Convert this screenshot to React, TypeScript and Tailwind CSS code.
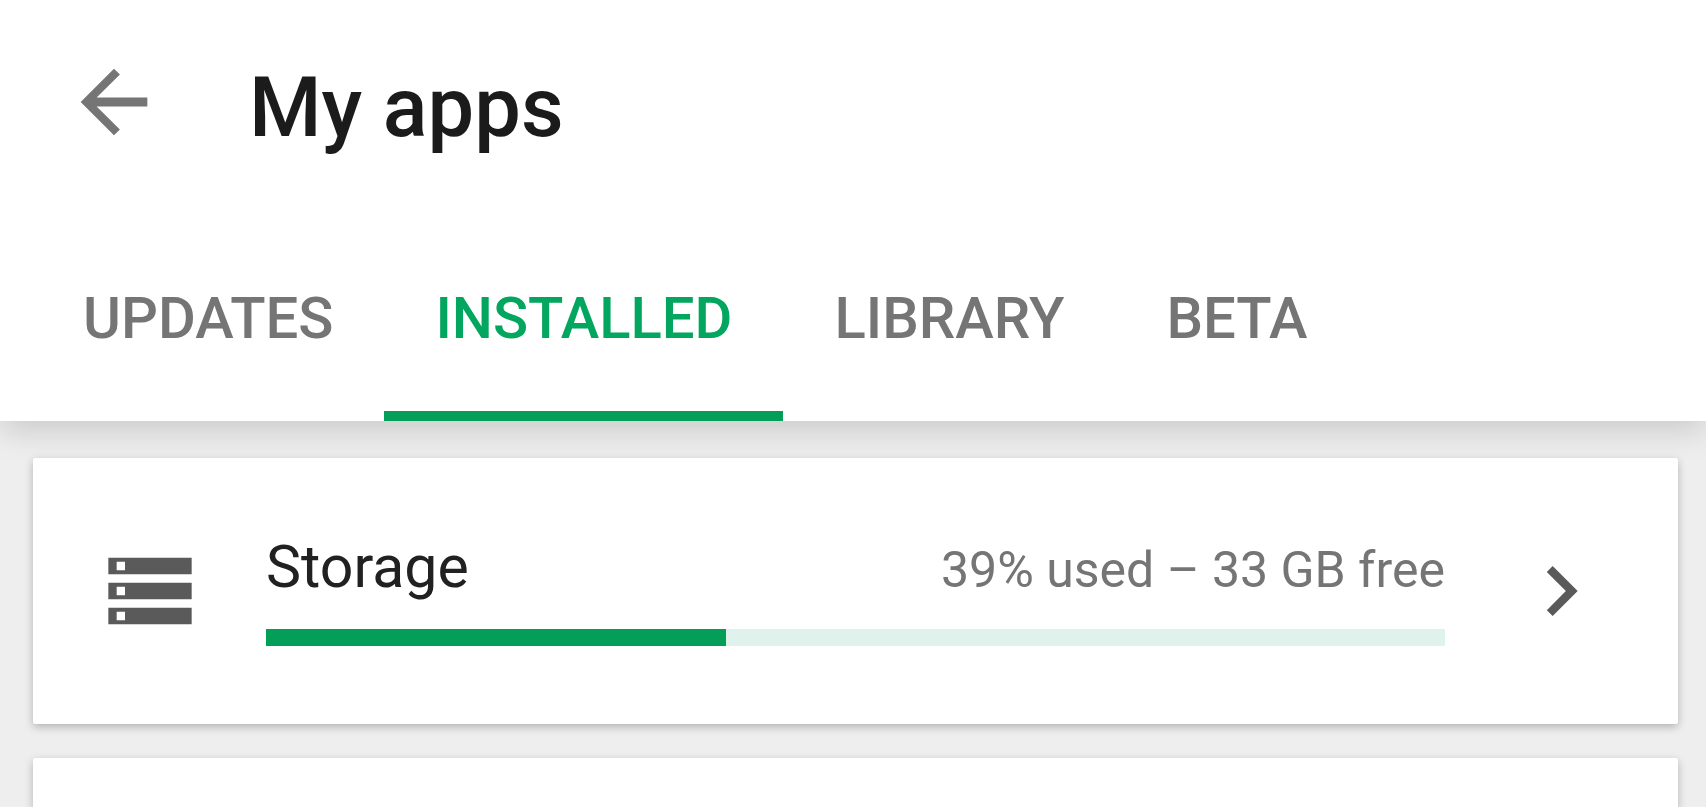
import { useState } from "react";

const tabs = ["Updates", "Installed", "Library", "Beta"];

const storage = { used: 39, free: "33 GB" };

function BackIcon() {
  return (
    <svg viewBox="0 0 24 24" className="size-[100px]" fill="currentColor" aria-hidden="true">
      <path d="M20 10.9H7.83l5.59-5.49L12 4l-8 8 8 8 1.41-1.41L7.83 13.1H20v-2.2z" />
    </svg>
  );
}

function StorageIcon() {
  return (
    <svg viewBox="0 0 24 24" className="size-[100px] shrink-0" fill="currentColor" aria-hidden="true">
      <path d="M2 20h20v-4H2v4zm2-3h2v2H4v-2zM2 4v4h20V4H2zm4 3H4V5h2v2zm-4 7h20v-4H2v4zm2-3h2v2H4v-2z" />
    </svg>
  );
}

function ChevronIcon() {
  return (
    <svg viewBox="0 0 24 24" className="size-[100px] shrink-0" fill="currentColor" aria-hidden="true">
      <path d="M10 6L8.59 7.41 13.17 12l-4.58 4.59L10 18l6-6z" />
    </svg>
  );
}

export default function App() {
  const [active, setActive] = useState("Installed");

  return (
    <div className="flex min-h-screen flex-col bg-[#eeeeee] font-['Roboto',sans-serif]">
      <header className="bg-white shadow-[0_10px_30px_rgba(0,0,0,0.15)]">
        <div className="flex items-start gap-[85px] px-16 pt-[52px]">
          <button type="button" aria-label="Back" className="text-[#757575]">
            <BackIcon />
          </button>
          <h1 className="pt-1.5 text-[83px] leading-[100px] font-medium text-[#1b1b1b]">My apps</h1>
        </div>

        <nav role="tablist" className="mt-20 flex px-8">
          {tabs.map((tab) => (
            <button
              key={tab}
              type="button"
              role="tab"
              aria-selected={active === tab}
              onClick={() => setActive(tab)}
              className={`border-b-10 px-[51px] pt-12 pb-[61px] text-[58px] leading-[64px] font-medium uppercase ${
                active === tab ? "border-[#039f58] text-[#03a65e]" : "border-transparent text-[#757575]"
              }`}
            >
              {tab}
            </button>
          ))}
        </nav>
      </header>

      <main className="flex flex-1 flex-col gap-[34px] pt-[37px] pr-7 pl-[33px]">
        <a
          href="#storage"
          className="flex h-[266px] items-center rounded-xs bg-white px-[67px] text-[#5a5a5a] shadow-[0_3px_8px_rgba(0,0,0,0.25)]"
        >
          <StorageIcon />
          <div className="mx-[66px] flex-1 pb-1">
            <div className="flex items-baseline justify-between">
              <h2 className="text-[59px] leading-[68px] text-[#212121]">Storage</h2>
              <p className="text-[50px] leading-[60px] text-[#757575]">
                {storage.used}% used – {storage.free} free
              </p>
            </div>
            <div
              role="progressbar"
              aria-label="Storage used"
              aria-valuenow={storage.used}
              aria-valuemin={0}
              aria-valuemax={100}
              className="mt-7 h-[17px] bg-[#dff2ec]"
            >
              <div className="h-full bg-[#039f58]" style={{ width: `${storage.used}%` }} />
            </div>
          </div>
          <ChevronIcon />
        </a>
        <section className="flex-1 rounded-t-xs bg-white shadow-[0_3px_8px_rgba(0,0,0,0.25)]" />
      </main>
    </div>
  );
}
